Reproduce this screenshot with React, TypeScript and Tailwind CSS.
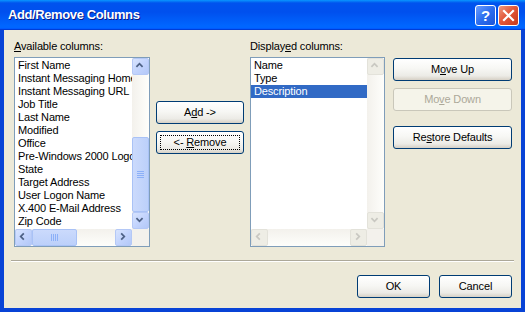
import type { ReactNode } from 'react';

const available = [
  'First Name',
  'Instant Messaging Home Page',
  'Instant Messaging URL',
  'Job Title',
  'Last Name',
  'Modified',
  'Office',
  'Pre-Windows 2000 Logon Name',
  'State',
  'Target Address',
  'User Logon Name',
  'X.400 E-Mail Address',
  'Zip Code',
];

const displayed = ['Name', 'Type', 'Description'];

function Button({
  children,
  disabled,
  focused,
  className = '',
}: {
  children: ReactNode;
  disabled?: boolean;
  focused?: boolean;
  className?: string;
}) {
  return (
    <div
      className={`relative flex items-center justify-center rounded-[3px] border text-[11px] ${
        disabled
          ? 'border-[#C9C7BA] bg-[#F5F4EA] text-[#ACA899]'
          : 'border-[#003C74] text-black bg-[linear-gradient(180deg,#FFFFFF_0%,#F7F7F4_45%,#ECEBE6_80%,#D6D0C5_100%)]'
      } ${className}`}
    >
      {focused && (
        <div className="absolute inset-[3px] border border-dotted border-black" />
      )}
      <span className="relative">{children}</span>
    </div>
  );
}

function Arrow({ dir, disabled }: { dir: 'up' | 'down' | 'left' | 'right'; disabled?: boolean }) {
  const pts = {
    up: '5,10 8.5,6.5 12,10',
    down: '5,7 8.5,10.5 12,7',
    left: '10,5 6.5,8.5 10,12',
    right: '7,5 10.5,8.5 7,12',
  }[dir];
  return (
    <div
      className={`h-[17px] w-[17px] shrink-0 rounded-[2px] border ${
        disabled
          ? 'border-[#E3E2DA] bg-[#EEEDE5]'
          : 'border-[#B4C8F6] bg-[linear-gradient(135deg,#D8E4FE_0%,#C3D4FD_50%,#B3C8F8_100%)]'
      }`}
    >
      <svg width="15" height="15" viewBox="0 0 17 17" className="-ml-px -mt-px">
        <polyline
          points={pts}
          fill="none"
          stroke={disabled ? '#C9C8C2' : '#4D6185'}
          strokeWidth="2"
        />
      </svg>
    </div>
  );
}

function Grip({ vertical }: { vertical?: boolean }) {
  return (
    <div className={`flex gap-[1px] ${vertical ? 'flex-col' : ''}`}>
      {[0, 1, 2, 3].map((i) => (
        <div
          key={i}
          className={`${vertical ? 'h-px w-[7px]' : 'h-[7px] w-px'} bg-[#8CB0F8]`}
        />
      ))}
    </div>
  );
}

function ListBox({
  items,
  selected,
  active,
}: {
  items: string[];
  selected?: number;
  active?: boolean;
}) {
  return (
    <div className="h-[190px] border border-[#7F9DB9] bg-white flex flex-col">
      <div className="flex flex-1 min-h-0">
        <div className="flex-1 min-w-0 overflow-hidden pt-px">
          {items.map((it, i) => (
            <div
              key={it}
              className={`h-[13px] leading-[13px] whitespace-nowrap pl-[3px] text-[11px] ${
                i === selected ? 'bg-[#316AC5] text-white' : 'text-black'
              }`}
            >
              {it}
            </div>
          ))}
        </div>
        <div className="w-[17px] flex flex-col bg-[linear-gradient(90deg,#F3F1EC,#FEFEFB)]">
          <Arrow dir="up" disabled={!active} />
          <div className="flex-1 flex flex-col justify-end">
            {active && (
              <div className="h-[75px] rounded-[2px] border border-[#A9C2F6] bg-[linear-gradient(90deg,#CBDAFC,#BCD0FA)] flex items-center justify-center">
                <Grip vertical />
              </div>
            )}
          </div>
          <Arrow dir="down" disabled={!active} />
        </div>
      </div>
      <div className="flex h-[17px]">
        <div className="flex flex-1 bg-[linear-gradient(180deg,#F3F1EC,#FEFEFB)]">
          <Arrow dir="left" disabled={!active} />
          <div className="flex-1">
            {active && (
              <div className="h-[17px] w-[45px] rounded-[2px] border border-[#A9C2F6] bg-[linear-gradient(180deg,#CBDAFC,#BCD0FA)] flex items-center justify-center">
                <Grip />
              </div>
            )}
          </div>
          <Arrow dir="right" disabled={!active} />
        </div>
        <div className="w-[17px] bg-[#F3F1EC]" />
      </div>
    </div>
  );
}

export default function App() {
  return (
    <div className="w-[525px] h-[312px] flex flex-col font-['Liberation_Sans',Arial,sans-serif] tracking-[-0.15px] select-none">
      {/* title bar */}
      <div className="h-[30px] shrink-0 flex items-center pl-[8px] pr-[6px] bg-[linear-gradient(180deg,#0997FF_0%,#0053EE_10%,#0050EE_40%,#0066FF_86%,#0066FF_92%,#005BFF_95%,#003DD7_97%,#003DD7_100%)]">
        <div className="flex-1 text-white font-bold text-[13px] tracking-[-0.4px] [text-shadow:1px_1px_#0A1883]">
          Add/Remove Columns
        </div>
        <div className="flex gap-[2px]">
          <div className="w-[21px] h-[21px] rounded-[3px] border border-white bg-[linear-gradient(135deg,#6A9CFF_0%,#2C6EEF_50%,#1C55D8_100%)] flex items-center justify-center text-white font-bold text-[15px] leading-none">
            ?
          </div>
          <div className="w-[21px] h-[21px] rounded-[3px] border border-white bg-[linear-gradient(135deg,#F09A80_0%,#E2583A_45%,#C8391B_100%)] flex items-center justify-center">
            <svg width="13" height="13" viewBox="0 0 13 13">
              <path d="M2 2 L11 11 M11 2 L2 11" stroke="white" strokeWidth="2.2" strokeLinecap="square" />
            </svg>
          </div>
        </div>
      </div>

      {/* body */}
      <div className="flex-1 flex flex-col bg-[#ECE9D8] border-x-4 border-b-4 border-[#0843D6] text-[11px] text-black">
        <div className="flex pt-[10px] pl-[10px]">
          <div className="w-[136px]">
            <div className="h-[17px] leading-[13px]">
              <u>A</u>vailable columns:
            </div>
            <ListBox items={available} active />
          </div>

          <div className="w-[88px] ml-[6px] pt-[61px] flex flex-col gap-[7px]">
            <Button className="h-[23px]">
              A<u>d</u>d -&gt;
            </Button>
            <Button className="h-[23px]" focused>
              &lt;- <u>R</u>emove
            </Button>
          </div>

          <div className="w-[135px] ml-[6px]">
            <div className="h-[17px] leading-[13px]">
              Display<u>e</u>d columns:
            </div>
            <ListBox items={displayed} selected={2} />
          </div>

          <div className="w-[119px] ml-[8px] pt-[18px] flex flex-col">
            <Button className="h-[23px]">
              M<u>o</u>ve Up
            </Button>
            <Button className="h-[23px] mt-[7px]" disabled>
              Mo<u>v</u>e Down
            </Button>
            <Button className="h-[23px] mt-[15px]">
              Re<u>s</u>tore Defaults
            </Button>
          </div>
        </div>

        <div className="mt-[13px] mx-[7px] h-[2px] border-t border-[#ACA899] border-b border-b-white" />

        <div className="flex justify-end gap-[9px] pr-[9px] mt-[13px]">
          <Button className="w-[73px] h-[23px]">OK</Button>
          <Button className="w-[73px] h-[23px]">Cancel</Button>
        </div>
      </div>
    </div>
  );
}
